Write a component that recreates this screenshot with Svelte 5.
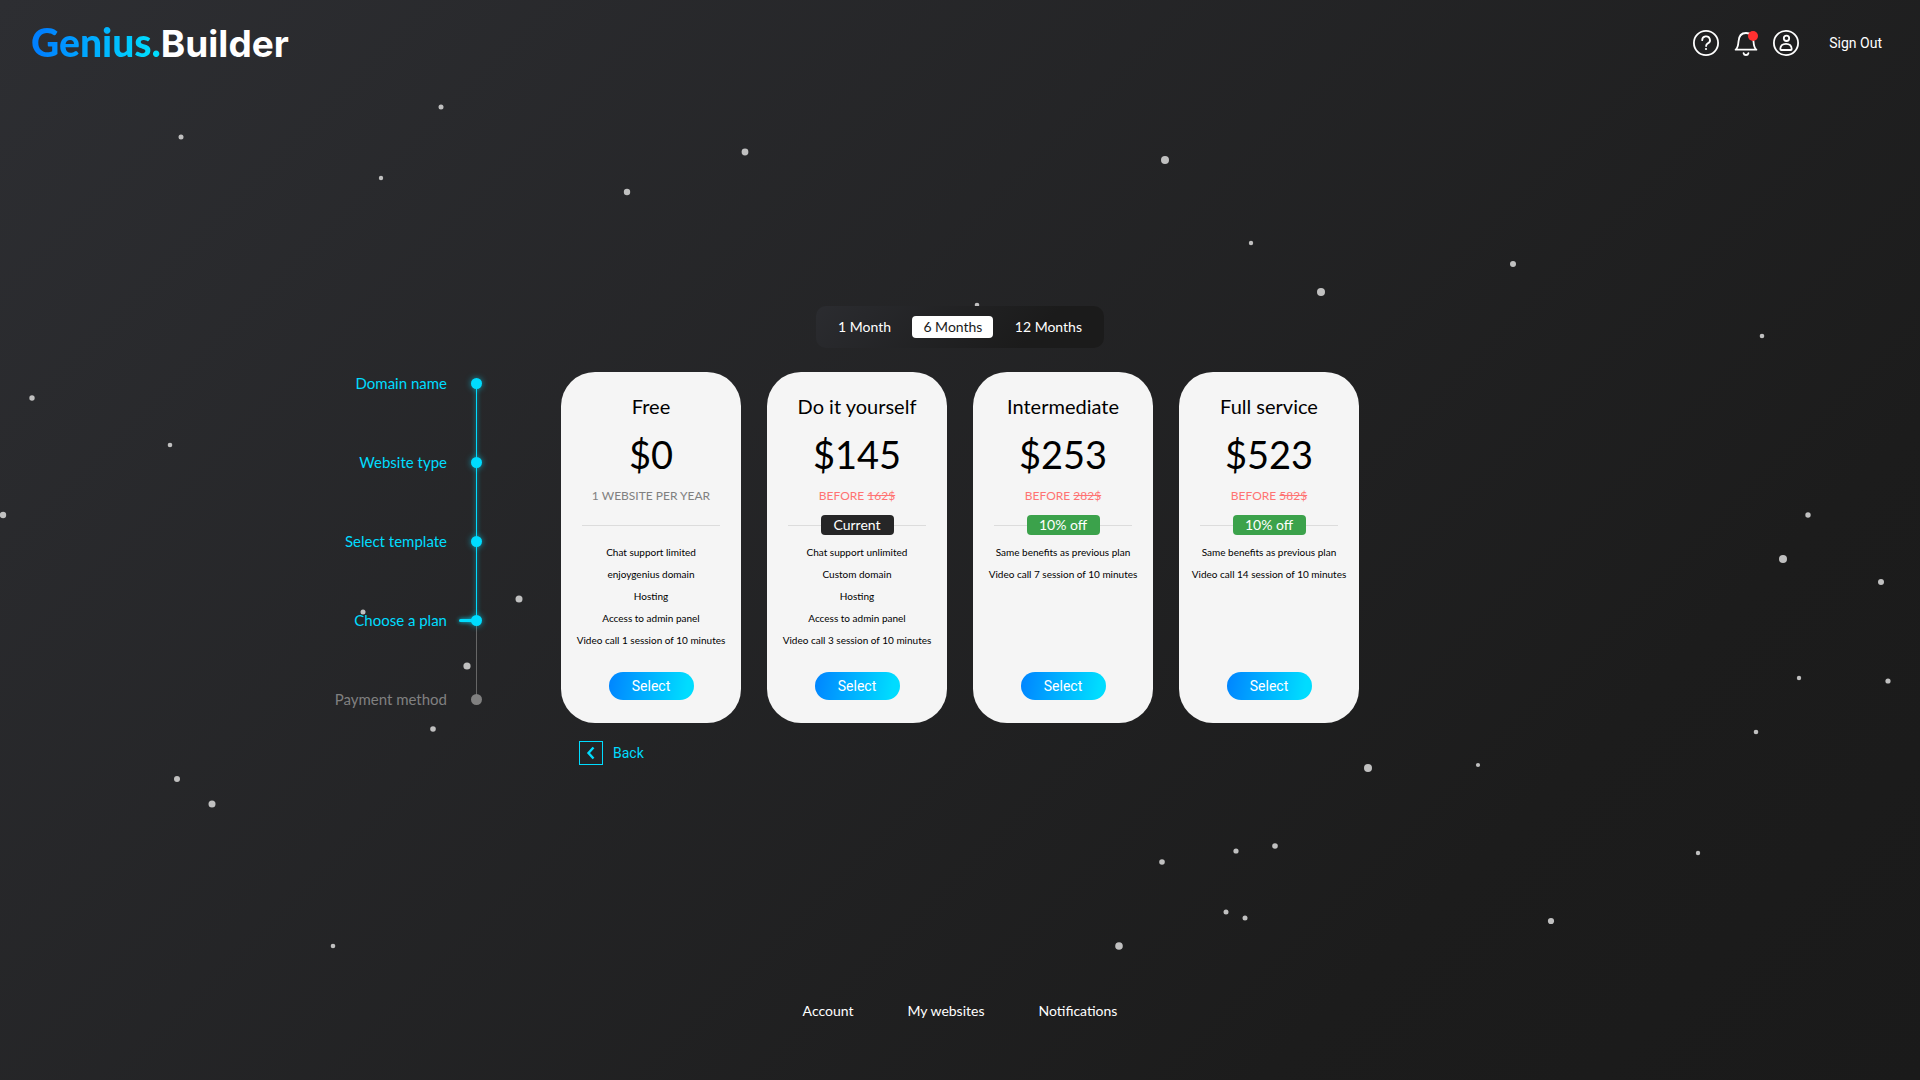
<script>
  const periods = ['1 Month', '6 Months', '12 Months'];
  let period = $state('6 Months');

  const steps = [
    { label: 'Domain name', state: 'done' },
    { label: 'Website type', state: 'done' },
    { label: 'Select template', state: 'done' },
    { label: 'Choose a plan', state: 'current' },
    { label: 'Payment method', state: 'todo' }
  ];

  const plans = [
    {
      name: 'Free', price: '$0', note: '1 WEBSITE PER YEAR',
      features: ['Chat support limited', 'enjoygenius domain', 'Hosting', 'Access to admin panel', 'Video call 1 session of 10 minutes']
    },
    {
      name: 'Do it yourself', price: '$145', before: '162$', badge: 'Current', current: true,
      features: ['Chat support unlimited', 'Custom domain', 'Hosting', 'Access to admin panel', 'Video call 3 session of 10 minutes']
    },
    {
      name: 'Intermediate', price: '$253', before: '282$', badge: '10% off',
      features: ['Same benefits as previous plan', 'Video call 7 session of 10 minutes']
    },
    {
      name: 'Full service', price: '$523', before: '582$', badge: '10% off',
      features: ['Same benefits as previous plan', 'Video call 14 session of 10 minutes']
    }
  ];

  // Each star is [x, y, radius]
  const stars = [
    [181, 137, 2.5], [441, 107, 2.5], [381, 178, 2.2], [627, 192, 3.2], [745, 152, 3.4],
    [1165, 160, 4], [1251, 243, 2.2], [1321, 292, 4], [1513, 264, 3], [1762, 336, 2.3],
    [32, 398, 2.7], [170, 445, 2.3], [3, 515, 3.2], [519, 599, 3.5], [363, 612, 2.5],
    [467, 666, 3.6], [433, 729, 2.8], [177, 779, 3], [212, 804, 3.5], [333, 946, 2.3],
    [977, 305, 2.3], [1808, 515, 2.7], [1783, 559, 4], [1881, 582, 3], [1799, 678, 2.2],
    [1888, 681, 2.6], [1756, 732, 2.3], [1368, 768, 4], [1478, 765, 2.1], [1162, 862, 2.8],
    [1236, 851, 2.6], [1275, 846, 2.8], [1226, 912, 2.5], [1245, 918, 2.5], [1119, 946, 3.8],
    [1551, 921, 3.1], [1698, 853, 2.2]
  ];
</script>

<div class="page">
  <svg class="sky" viewBox="0 0 1920 1080" preserveAspectRatio="xMidYMid slice" aria-hidden="true">
    {#each stars as [x, y, r]}
      <circle cx={x} cy={y} {r} />
    {/each}
  </svg>

  <header>
    <a class="logo" href="#home"><span class="genius">Genius.</span><span class="builder">Builder</span></a>
    <nav class="tools" aria-label="Account tools">
      <button class="icon" aria-label="Help">
        <svg viewBox="0 0 26 26">
          <circle cx="13" cy="13" r="12.1" />
          <path d="M9.2 10.2a3.9 3.7 0 1 1 5.6 3.2c-1.2.7-1.7 1.3-1.7 2.6" />
          <circle class="fill" cx="13" cy="19" r="1.1" />
        </svg>
      </button>
      <button class="icon" aria-label="Notifications">
        <svg viewBox="0 0 26 26">
          <path d="M2.6 19.7h20.8c-2-1.4-2.6-4-2.9-8.2C20.2 6.3 17.5 3 13 3S5.8 6.3 5.5 11.5C5.2 15.7 4.6 18.3 2.6 19.7z" />
          <path d="M10.6 23.2c.5 2.4 4.3 2.4 4.8 0" />
          <circle class="alert" cx="20" cy="6" r="5" />
        </svg>
      </button>
      <button class="icon" aria-label="Profile">
        <svg viewBox="0 0 26 26">
          <circle cx="13" cy="13" r="12.1" />
          <circle cx="13.5" cy="8.3" r="2.7" />
          <path d="M8.3 20c-.7 0-1-.4-1-1 .1-3.300 2.200-5.200 5.700-5.200s5.600 1.900 5.700 5.200c0 .6-.3 1-1 1z" />
        </svg>
      </button>
      <button class="signout">Sign Out</button>
    </nav>
  </header>

  <main>
    <div class="periods" role="group" aria-label="Billing period">
      {#each periods as p}
        <button class:active={p === period} aria-pressed={p === period} onclick={() => (period = p)}>{p}</button>
      {/each}
    </div>

    <ol class="steps">
      {#each steps as step}
        <li class={step.state}><span class="label">{step.label}</span><span class="dot"></span></li>
      {/each}
    </ol>

    <div class="plans">
      {#each plans as plan}
        <article>
          <h2>{plan.name}</h2>
          <p class="price">{plan.price}</p>
          {#if plan.before}
            <p class="note sale">BEFORE <s>{plan.before}</s></p>
          {:else}
            <p class="note">{plan.note}</p>
          {/if}
          <div class="rule">
            {#if plan.badge}<span class="badge" class:dark={plan.current}>{plan.badge}</span>{/if}
          </div>
          <ul>
            {#each plan.features as feature}<li>{feature}</li>{/each}
          </ul>
          <button class="select">Select</button>
        </article>
      {/each}
    </div>

    <button class="back">
      <svg viewBox="0 0 24 24" aria-hidden="true">
        <rect x="0.5" y="0.5" width="23" height="23" />
        <path d="M14.500 6.500l-5 5.500 5 5.500" />
      </svg>
      Back
    </button>
  </main>

  <footer>
    <a href="#account">Account</a>
    <a href="#websites">My websites</a>
    <a href="#notifications">Notifications</a>
  </footer>
</div>

<style>
  :global(body) { margin: 0; }

  .page {
    position: relative;
    isolation: isolate;
    box-sizing: border-box;
    min-height: 100vh;
    display: flex;
    flex-direction: column;
    color: #fff;
    background: linear-gradient(135deg, #2d2e32 0%, #1c1c1c 78%, #1a1a1a 100%);
    font: 14px/20px Lato, "Open Sans", sans-serif;
  }
  .sky {
    position: absolute;
    inset: 0;
    z-index: -1;
    width: 100%;
    height: 100%;
    fill: #c0c0c0;
  }
  button {
    margin: 0;
    padding: 0;
    border: 0;
    background: none;
    color: inherit;
    font: inherit;
    cursor: pointer;
  }
  a { color: inherit; text-decoration: none; }
  h2, p, ul, ol { margin: 0; padding: 0; font-weight: 400; }
  ul, ol { list-style: none; }

  header {
    display: flex;
    align-items: center;
    justify-content: space-between;
    height: 86px;
    padding: 0 38px 0 31px;
  }
  .logo { display: flex; align-items: baseline; line-height: 48px; }
  .genius {
    font-size: 39px;
    font-weight: 900;
    color: transparent;
    background: linear-gradient(100deg, #0080ff 10%, #00dcff 90%);
    -webkit-background-clip: text;
    background-clip: text;
  }
  .builder { font-family: Inter, sans-serif; font-size: 37px; font-weight: 700; }
  .tools { display: flex; align-items: center; gap: 14px; }
  .icon, .icon svg { display: block; width: 26px; height: 26px; }
  .icon svg {
    fill: none;
    stroke: #fff;
    stroke-width: 1.8;
    stroke-linecap: round;
    stroke-linejoin: round;
  }
  .icon .fill { fill: #fff; stroke: none; }
  .icon .alert { fill: #ff3030; stroke: none; }
  .signout { margin-left: 16px; font-family: Roboto, sans-serif; }

  main {
    flex: 1;
    display: grid;
    grid-template-columns: 1fr auto 1fr;
    align-content: center;
    row-gap: 24px;
  }
  .periods {
    grid-column: 2;
    justify-self: center;
    box-sizing: border-box;
    min-width: 288px;
    display: flex;
    justify-content: space-between;
    padding: 10px 11px;
    border-radius: 10px;
    background: linear-gradient(135deg, #2b2c30, #1b1b1b 75%);
  }
  .periods button { padding: 0 11px; border-radius: 4px; line-height: 22px; }
  .periods .active { color: #1b1b1b; background: #fff; }

  .steps { grid-column: 1; grid-row: 2; justify-self: end; padding: 1px 79px 0 0; }
  .steps li {
    position: relative;
    display: flex;
    align-items: center;
    justify-content: flex-end;
    gap: 24px;
    height: 20px;
    margin-bottom: 59px;
    color: #00dcff;
    font-size: 15px;
  }
  .steps li:last-child { margin-bottom: 0; }
  .dot {
    width: 11px;
    height: 11px;
    border-radius: 50%;
    background: currentColor;
    box-shadow: 0 0 6px #00dcff99;
  }
  .steps li:not(:last-child)::after {
    content: "";
    position: absolute;
    top: 10px;
    right: 5px;
    width: 1px;
    height: 79px;
    background: #00dcff;
    box-shadow: 0 0 4px #00dcff;
  }
  .steps .current::before {
    content: "";
    position: absolute;
    top: 9px;
    right: 5px;
    width: 18px;
    height: 3px;
    border-radius: 2px;
    background: #00dcff;
    box-shadow: 0 0 4px #00dcff;
  }
  .steps .current:not(:last-child)::after { background: #666; box-shadow: none; z-index: -1; }
  .steps .todo { color: #808080; }
  .todo .dot { box-shadow: none; }

  .plans { grid-column: 2; display: grid; grid-template-columns: repeat(4, 180px); gap: 26px; }
  article {
    box-sizing: border-box;
    min-height: 351px;
    display: flex;
    flex-direction: column;
    align-items: center;
    padding: 22px 12px 23px;
    border-radius: 34px;
    color: #000;
    background: #f5f5f5;
    white-space: nowrap;
  }
  h2 { font-size: 20px; line-height: 24px; }
  .price { margin-top: 12px; font-size: 38px; line-height: 48px; }
  .note { margin-top: 8px; font-size: 12px; line-height: 20px; color: #808080; }
  .sale { color: #ff7373; }
  .rule {
    align-self: stretch;
    display: flex;
    align-items: center;
    height: 20px;
    margin: 9px 9px 0;
  }
  .rule::before, .rule::after { content: ""; flex: 1; height: 1px; background: #dcdcdc; }
  .badge {
    width: 73px;
    border-radius: 4px;
    color: #fff;
    background: #3ba24b;
    text-align: center;
  }
  .dark { background: #262627; }
  article ul { margin-top: 6px; font-size: 10px; line-height: 22px; text-align: center; }
  .select {
    width: 85px;
    margin-top: auto;
    border-radius: 14px;
    color: #fff;
    background: linear-gradient(100deg, #0084ff, #00dcff 90%);
    font: 14px/28px Roboto, sans-serif;
  }

  .back {
    grid-column: 2;
    justify-self: start;
    display: flex;
    align-items: center;
    gap: 10px;
    margin: -6px 0 0 18px;
    color: #00dcff;
    font: 14px/24px Roboto, sans-serif;
  }
  .back svg { width: 24px; height: 24px; fill: none; stroke: currentColor; }
  .back path { stroke-width: 2.4; }

  footer {
    display: flex;
    justify-content: center;
    gap: 54px;
    padding: 16px 0 59px;
  }
</style>
